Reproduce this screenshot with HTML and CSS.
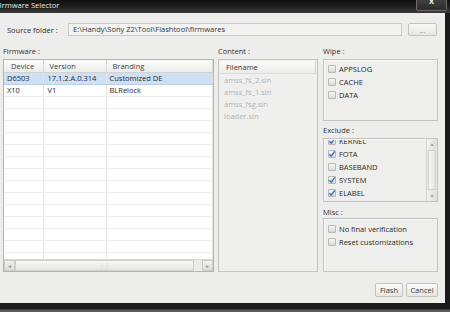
FILE: index.html
```html
<!DOCTYPE html>
<html lang="en">
<head>
  <meta charset="UTF-8">
  <title>Firmware Selector</title>
  <link rel="stylesheet" href="styles.css">
</head>
<body>
  <div class="titlebar">
    <span class="title">Firmware Selector</span>
    <span class="close">X</span>
  </div>

  <div class="dialog">
    <div class="source-row">
      <label class="source-label">Source folder :</label>
      <div class="textbox">E:\Handy\Sony Z2\Tool\Flashtool\firmwares</div>
      <button class="btn browse">...</button>
    </div>

    <div class="main">
      <div class="col col-firmware">
        <div class="group-label">Firmware :</div>
        <div class="box table-box">
          <div class="table-scroll">
            <table class="fw-table">
              <thead>
                <tr><th class="c-dev">Device</th><th class="c-ver">Version</th><th>Branding</th></tr>
              </thead>
              <tbody id="fwRows">
                <tr class="selected"><td>D6503</td><td>17.1.2.A.0.314</td><td>Customized DE</td></tr>
                <tr><td>X10</td><td>V1</td><td>BLRelock</td></tr>
              </tbody>
            </table>
          </div>
          <div class="hscroll">
            <span class="arrow">&#9666;</span>
            <span class="hthumb"><span class="grip">&#8942;&#8942;</span></span>
            <span class="arrow">&#9656;</span>
          </div>
        </div>
      </div>

      <div class="col col-content">
        <div class="group-label">Content :</div>
        <div class="box content-box">
          <div class="list-head">Filename</div>
          <div class="file">amss_fs_2.sin</div>
          <div class="file">amss_fs_1.sin</div>
          <div class="file">amss_fsg.sin</div>
          <div class="file">loader.sin</div>
        </div>
      </div>

      <div class="col col-side">
        <div class="group-label">Wipe :</div>
        <div class="box group wipe">
          <div class="check"><span class="cb"></span>APPSLOG</div>
          <div class="check"><span class="cb"></span>CACHE</div>
          <div class="check"><span class="cb"></span>DATA</div>
        </div>

        <div class="group-label gap-label">Exclude :</div>
        <div class="box group exclude">
          <div class="exclude-view">
            <div class="exclude-list">
              <div class="check"><span class="cb on"><svg viewBox="0 0 8 8"><path d="M1.3 4.2 L3.2 6.2 L6.8 1.4"/></svg></span>KERNEL</div>
              <div class="check"><span class="cb on"><svg viewBox="0 0 8 8"><path d="M1.3 4.2 L3.2 6.2 L6.8 1.4"/></svg></span>FOTA</div>
              <div class="check"><span class="cb"></span>BASEBAND</div>
              <div class="check"><span class="cb on"><svg viewBox="0 0 8 8"><path d="M1.3 4.2 L3.2 6.2 L6.8 1.4"/></svg></span>SYSTEM</div>
              <div class="check"><span class="cb on"><svg viewBox="0 0 8 8"><path d="M1.3 4.2 L3.2 6.2 L6.8 1.4"/></svg></span>ELABEL</div>
            </div>
          </div>
          <div class="vscroll">
            <span class="varrow">&#9652;</span>
            <span class="vthumb"></span>
            <span class="varrow">&#9662;</span>
          </div>
        </div>

        <div class="group-label gap-label misc-label">Misc :</div>
        <div class="box group misc">
          <div class="check"><span class="cb"></span>No final verification</div>
          <div class="check"><span class="cb"></span>Reset customizations</div>
        </div>
      </div>
    </div>

    <div class="footer">
      <button class="btn">Flash</button>
      <button class="btn">Cancel</button>
    </div>
  </div>

  <script>
    // fill the rest of the firmware table with empty rows
    const rows = document.getElementById('fwRows');
    for (let i = 0; i < 16; i++) {
      const tr = document.createElement('tr');
      tr.innerHTML = '<td></td><td></td><td></td>';
      rows.appendChild(tr);
    }
  </script>
</body>
</html>
```

FILE: styles.css
```css
/* Reset */
body, button, table {
  margin: 0;
  padding: 0;
}

body {
  width: 450px;
  height: 312px;
  overflow: hidden;
  font-family: "Open Sans", "DejaVu Sans", sans-serif;
  font-size: 7.5px;
  color: #2a2a2a;
  background: linear-gradient(to bottom, #1b1b1b 0, #1b1b1b 309px, #5c5c5c 310px);
}

/* Window title */
.titlebar {
  height: 13px;
  display: flex;
  align-items: flex-start;
  background: linear-gradient(to bottom, #111 0, #1c1c1c 6px, #3c3c3c 13px);
  overflow: hidden;
}
.title {
  color: #f2f2f2;
  line-height: 10px;
  text-indent: -4px;
  text-shadow: 0 0 2px #000;
}
.close {
  margin-left: auto;
  margin-right: 3px;
  margin-top: -6px;
  width: 29px;
  height: 15px;
  border: 1px solid #6a6a6a;
  border-radius: 2px;
  background: linear-gradient(to bottom, #4a4a4a, #2c2c2c);
  color: #fff;
  font-weight: bold;
  text-align: center;
  line-height: 13px;
}

/* Dialog body */
.dialog {
  width: 445px;
  height: 290px;
  box-sizing: border-box;
  padding: 10px 7px 0 3px;
  background: #ededeb;
}

.source-row {
  display: flex;
  align-items: center;
  height: 13px;
}
.source-label {
  width: 61px;
  padding-left: 4px;
}
.textbox {
  width: 334px;
  height: 13px;
  box-sizing: border-box;
  border: 1px solid #c9c9c7;
  background: #f3f3f1;
  padding-left: 4px;
  line-height: 11px;
  color: #333;
}
.btn {
  font-family: inherit;
  font-size: 7.5px;
  color: #3a3a3a;
  height: 14px;
  padding: 0;
  border: 1px solid #c2c2c0;
  border-radius: 2px;
  background: linear-gradient(to bottom, #f8f8f7, #e6e6e4);
  line-height: 12px;
}
.browse {
  width: 29px;
  height: 13px;
  margin-left: 6px;
  color: #888;
}

.main {
  display: flex;
  margin-top: 10px;
  height: 226px;
}
.col {
  display: flex;
  flex-direction: column;
}
.col-firmware { width: 211px; }
.col-content { width: 100px; margin-left: 4px; }
.col-side { width: 115px; margin-left: 5px; }

.group-label {
  height: 13px;
  line-height: 11px;
  color: #333;
}
.box {
  box-sizing: border-box;
  border: 1px solid #c3c3c1;
}

/* Firmware table */
.table-box {
  height: 213px;
  background: #fff;
  border-color: #b4b4b2;
  display: flex;
  flex-direction: column;
}
.table-scroll {
  flex: 1;
  overflow: hidden;
}
.fw-table {
  width: 100%;
  border-collapse: collapse;
  table-layout: fixed;
}
.fw-table th {
  height: 12px;
  padding: 0 0 0 6px;
  font-weight: normal;
  text-align: left;
  color: #444;
  background: linear-gradient(to bottom, #fbfbfb, #ececea);
  border-right: 1px solid #d6d6d4;
  border-bottom: 1px solid #d2d2d0;
}
.fw-table th.c-dev { width: 39px; padding-left: 7px; box-sizing: border-box; }
.fw-table th.c-ver { width: 63px; box-sizing: border-box; }
.fw-table td {
  height: 11px;
  padding: 0 0 0 3px;
  border-right: 1px solid #e4e4e2;
  border-bottom: 1px solid #ededeb;
  white-space: nowrap;
  overflow: hidden;
  line-height: 11px;
}
.fw-table td:nth-child(2) { padding-left: 4px; }
.fw-table tr.selected td {
  background: #cfe0f4;
  border-bottom-color: #b9d0ea;
  color: #1e2a3a;
}

.hscroll {
  height: 11px;
  display: flex;
  align-items: stretch;
  background: #ebebe9;
  border-top: 1px solid #d8d8d6;
}
.arrow {
  width: 11px;
  color: #9a9a9a;
  text-align: center;
  line-height: 10px;
  font-size: 6px;
  background: linear-gradient(to bottom, #f2f2f0, #dcdcda);
  border: 1px solid #cacac8;
  box-sizing: border-box;
}
.hthumb {
  flex: 1;
  margin-right: 8px;
  border: 1px solid #d0d0ce;
  background: linear-gradient(to bottom, #f7f7f5, #e4e4e2);
  text-align: center;
  color: #aaa;
  font-size: 5px;
  line-height: 9px;
}

/* Content list */
.content-box {
  height: 213px;
  background: #efefed;
  padding: 1px;
}
.list-head {
  height: 12px;
  line-height: 12px;
  padding-left: 6px;
  color: #3a3a3a;
  background: linear-gradient(to bottom, #fafafa, #ececea);
  border-right: 1px solid #d4d4d2;
  border-bottom: 1px solid #dcdcda;
}
.file {
  height: 12px;
  line-height: 12px;
  padding-left: 4px;
  color: #b3b3b1;
}

/* Check groups */
.group {
  background: #eeeeec;
  box-shadow: inset 1px 1px 0 #fafafa;
}
.wipe {
  height: 62px;
  padding-top: 2px;
}
.gap-label {
  height: 17px;
  line-height: 12px;
  padding-top: 3px;
  box-sizing: border-box;
}
.misc-label {
  height: 16px;
  padding-top: 4px;
}
.check {
  display: flex;
  align-items: center;
  height: 13px;
  padding-left: 4px;
  color: #2a2a2a;
}
.cb {
  width: 8px;
  height: 8px;
  margin-right: 3px;
  box-sizing: border-box;
  border: 1px solid #b8b8b6;
  border-radius: 1px;
  background: linear-gradient(to bottom, #f6f6f4, #dadad8);
}
.cb svg {
  display: block;
  width: 8px;
  height: 8px;
  margin: -1px 0 0 -1px;
  fill: none;
  stroke: #3770b6;
  stroke-width: 1.3;
}

.exclude {
  height: 64px;
  display: flex;
  overflow: hidden;
}
.exclude-view {
  flex: 1;
  margin-top: 1px;
  overflow: hidden;
}
.exclude-list {
  margin-top: -6px;
}
.vscroll {
  width: 10px;
  display: flex;
  flex-direction: column;
  background: #e8e8e6;
  border-left: 1px solid #d4d4d2;
}
.varrow {
  height: 10px;
  font-size: 6px;
  line-height: 10px;
  text-align: center;
  color: #a0a0a0;
  background: linear-gradient(to right, #f2f2f0, #dedede);
}
.vthumb {
  flex: 1;
  margin: 1px 1px;
  border: 1px solid #d0d0ce;
  background: linear-gradient(to right, #f7f7f5, #e4e4e2);
}

.misc {
  height: 54px;
  padding-top: 3px;
}

/* Bottom buttons */
.footer {
  display: flex;
  justify-content: flex-end;
  margin-top: 11px;
}
.footer .btn { width: 28px; }
.footer .btn + .btn { width: 32px; margin-left: 3px; }
```
